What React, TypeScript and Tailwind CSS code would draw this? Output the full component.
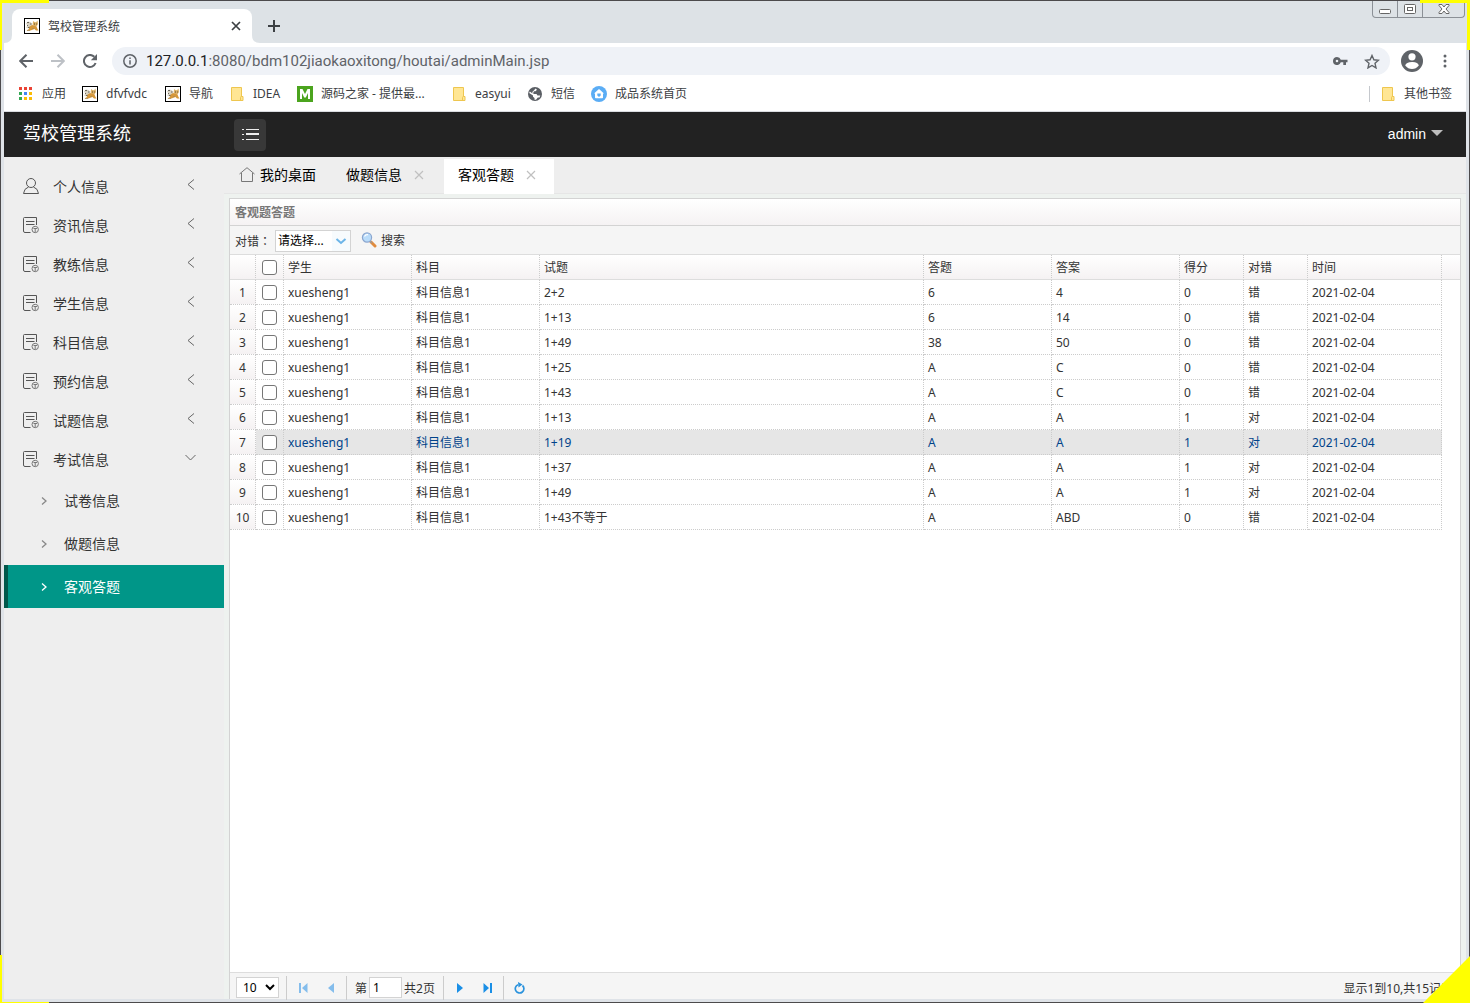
import React from "react";

const UI = "font-['Noto_Sans','Noto_Sans_CJK_SC',sans-serif]";

function TomcatIcon() {
  return (
    <svg width="16" height="16" viewBox="0 0 16 16" className="shrink-0" aria-hidden="true">
      <rect x=".5" y=".5" width="15" height="15" fill="#fff" stroke="#000" />
      <path d="M2 5.500l2-2 2.500.5L8.500 6 7 9l-2.500 1.500L2 9.500l1.500-2z" fill="#d8d2c2" />
      <path d="M9 3l1.500 1 1.500.2L13.500 2.500 14 6l-1.500 2.500L10 8.500 8.700 6.500z" fill="#ddb267" />
      <path d="M5 9l3-2 2 .5 2.500 1 1 2.500 1 1.500H12l-1.500-1.500-2 .7-2 .8H2.500L5 11z" fill="#d6983b" />
      <path d="M3 4.500h2M6 6h1.500M3 7.500h1M4 9.500h1.500" stroke="#6f6a60" fill="none" />
      <path d="M3 12.500h3M8 10.500h2" stroke="#a88b55" strokeWidth=".8" fill="none" />
      <path d="M10 6h1M12.200 6h.8" stroke="#5b482a" />
    </svg>
  );
}

function FolderIcon() {
  return (
    <svg width="13" height="14" viewBox="0 0 13 14" className="shrink-0" aria-hidden="true">
      <path d="M.5.500h10v9h1.500v4H.5z" fill="#ffe694" stroke="#eec64f" />
      <path d="M9.500 13V10.500q0-1 1-1" fill="none" stroke="#eec64f" />
    </svg>
  );
}

function AppsIcon() {
  const colors = ["#ea4335", "#ea4335", "#ea4335", "#34a853", "#4285f4", "#fbbc05", "#34a853", "#fbbc05", "#fbbc05"];
  return (
    <svg width="14" height="14" viewBox="0 0 14 14" className="shrink-0" aria-hidden="true">
      {colors.map((c, i) => (
        <rect key={i} x={(i % 3) * 5} y={Math.floor(i / 3) * 5} width="3" height="3" fill={c} />
      ))}
    </svg>
  );
}

function MIcon() {
  return (
    <svg width="16" height="16" viewBox="0 0 16 16" className="shrink-0" aria-hidden="true">
      <rect width="16" height="16" fill="#4ba41e" />
      <path d="M3 13V3h2.500L8 8l2.500-5H13v10h-2V7l-2.200 4.500H7.200L5 7v6z" fill="#fff" />
    </svg>
  );
}

function GlobeIcon() {
  return (
    <svg width="14" height="14" viewBox="0 0 14 14" className="shrink-0" aria-hidden="true">
      <circle cx="7" cy="7" r="7" fill="#5a5e64" />
      <path d="M7.500 1.500L9 2.800 7.500 4.300H6l-1 1.900 1 .8h2.500l1 1.500h2.800l-.8 2H9.800L8 12.800H6.500V11L5 9.800V8.500L1.200 6l.6-1.500 2.700 2L4.300 5l2-2z" fill="#fff" />
    </svg>
  );
}

function HouseBadgeIcon() {
  return (
    <svg width="16" height="16" viewBox="0 0 16 16" className="shrink-0" aria-hidden="true">
      <circle cx="8" cy="8" r="8" fill="#5badf5" />
      <path d="M8 3L3 7.500h1v4q0 .8.800.8h6.400q.8 0 .8-.8v-4h1z" fill="#fff" />
      <path d="M6.300 7.500h3.400v2L8 11 6.300 9.500z" fill="#5badf5" />
    </svg>
  );
}

function UserIcon() {
  return (
    <svg width="16" height="16" viewBox="0 0 16 16" fill="none" stroke="#555" className="shrink-0" aria-hidden="true">
      <circle cx="8" cy="5" r="4.500" />
      <path d="M5.500 9Q1 10.500.5 15.500h15Q15 10.500 10.500 9" />
    </svg>
  );
}

function DocIcon() {
  return (
    <svg width="16" height="17" viewBox="0 0 16 17" fill="none" stroke="#555" className="shrink-0" aria-hidden="true">
      <path d="M13.500 8V.500H1.500Q.5.500.5 1.500V14q0 1.500 1.500 1.500h5.500" />
      <path d="M3 4.500h8.500M3 7.500h8.500" />
      <circle cx="12.200" cy="12.500" r="3.200" stroke="#777" />
      <path d="M10.500 11.500h3.500M12.200 11.500V15" stroke="#777" />
    </svg>
  );
}

function Chevron({ dir, color = "#666", w = 6, h = 10 }: { dir: "left" | "right" | "down"; color?: string; w?: number; h?: number }) {
  const d =
    dir === "left"
      ? `M ${w} 0.5 L 1 ${h / 2} L ${w} ${h - 0.5}`
      : dir === "right"
        ? `M 1 0.5 L ${w} ${h / 2} L 1 ${h - 0.5}`
        : `M 0.5 1 L ${w / 2} ${h} L ${w - 0.5} 1`;
  return (
    <svg width={w + 1} height={h + 1} fill="none" stroke={color} strokeWidth={dir === "right" ? 1.3 : 1} className="shrink-0" aria-hidden="true">
      <path d={d} />
    </svg>
  );
}

function Cross({ size, color, stroke }: { size: number; color: string; stroke: number }) {
  return (
    <svg width={size} height={size} stroke={color} strokeWidth={stroke} aria-hidden="true">
      <path d={`M1 1L${size - 1} ${size - 1}M${size - 1} 1L1 ${size - 1}`} />
    </svg>
  );
}

function TitleStrip() {
  return (
    <div className="flex h-[42px] shrink-0 items-end justify-between bg-[#dde2e6] pl-2">
      <div className="flex items-end">
        <div className="relative flex h-[34px] w-60 items-center rounded-t-lg bg-white pr-[11px] pl-3">
          <svg className="absolute bottom-0 -left-2" width="8" height="8" aria-hidden="true"><path d="M8 0v8H0Q8 8 8 0" fill="#fff" /></svg>
          <svg className="absolute -right-2 bottom-0" width="8" height="8" aria-hidden="true"><path d="M0 0v8h8Q0 8 0 0" fill="#fff" /></svg>
          <TomcatIcon />
          <span className="ml-2 flex-1 pt-[2px] text-xs text-[#3c4043]">驾校管理系统</span>
          <button aria-label="关闭标签页"><Cross size={10} color="#3c4043" stroke={1.7} /></button>
        </div>
        <button aria-label="新标签页" className="flex h-[34px] w-11 items-center justify-center">
          <svg width="12" height="12" stroke="#3c4043" strokeWidth="2" aria-hidden="true"><path d="M6 0v12M0 6h12" /></svg>
        </button>
      </div>
      <div className="mr-px flex h-[17px] self-start rounded-b-[4px] border border-t-0 border-[#8b9096] text-[#5a5e64]">
        <button aria-label="最小化" className="flex w-[25px] items-center justify-center border-r border-[#8b9096]">
          <svg width="12" height="5" className="mt-1" aria-hidden="true"><rect x=".5" y=".5" width="11" height="4" rx="1" fill="#fff" stroke="#666" /></svg>
        </button>
        <button aria-label="还原" className="flex w-[25px] items-center justify-center border-r border-[#8b9096]">
          <svg width="12" height="10" fill="#fff" stroke="#666" aria-hidden="true"><rect x=".5" y=".5" width="11" height="9" rx="1" /><rect x="3.500" y="3.500" width="5" height="3" /></svg>
        </button>
        <button aria-label="关闭" className="flex w-[41px] items-center justify-center">
          <svg width="12" height="10" viewBox="0 0 12 10" fill="#fff" stroke="#666" aria-hidden="true"><path d="M1 .5h3l2 2.500L8 .5h3v1L8 5l3 3.500v1H8L6 7 4 9.500H1v-1L4 5 1 1.500z" /></svg>
        </button>
      </div>
    </div>
  );
}

function AddressBar() {
  return (
    <div className="flex h-9 shrink-0 items-center bg-white pr-[19px] pl-[15px]">
      <button aria-label="后退">
        <svg width="14" height="14" fill="none" stroke="#5f6368" strokeWidth="2" aria-hidden="true"><path d="M14 7H1.500M7.500.7L1.200 7l6.300 6.300" /></svg>
      </button>
      <button aria-label="前进" className="ml-[18px]">
        <svg width="14" height="14" fill="none" stroke="#bdc1c6" strokeWidth="2" aria-hidden="true"><path d="M0 7h12.500M6.500.7L12.800 7l-6.300 6.300" /></svg>
      </button>
      <button aria-label="刷新" className="ml-[18px]">
        <svg width="14" height="14" viewBox="0 0 14 14" aria-hidden="true">
          <path d="M12.600 9A6 6 0 1 1 11.300 2.800" fill="none" stroke="#5f6368" strokeWidth="2" />
          <path d="M14 0v6.200H7.800z" fill="#5f6368" />
        </svg>
      </button>
      <div className="ml-[15px] flex h-7 flex-1 items-center rounded-full bg-[#eff2f7] pr-[10px] pl-[11px]">
        <svg width="14" height="14" fill="none" stroke="#5f6368" strokeWidth="1.500" aria-hidden="true"><circle cx="7" cy="7" r="6.200" /><path d="M7 6.200v4.300M7 3.500v1.500" /></svg>
        <a href="#address" className="ml-[9px] flex-1 font-['Roboto',sans-serif] text-[15px] leading-7 text-[#5f6368]">
          <span className="text-[#202124]">127.0.0.1</span>:8080/bdm102jiaokaoxitong/houtai/adminMain.jsp
        </a>
        <button aria-label="密码">
          <svg width="15" height="8" viewBox="0 0 15 8" aria-hidden="true"><path fill="#5f6368" fillRule="evenodd" d="M4 0a4 4 0 0 1 3.800 2.700H14.500v2.600H13V8h-2.700V5.300H7.800A4 4 0 1 1 4 0zm0 2.700a1.300 1.300 0 1 0 0 2.600 1.300 1.300 0 0 0 0-2.600z" /></svg>
        </button>
        <button aria-label="收藏" className="ml-4">
          <svg width="16" height="15" viewBox="0 0 16 15" aria-hidden="true"><path d="M8 1.500l1.900 4.300 4.600.4-3.500 3.100 1 4.600L8 11.500l-4 2.400 1-4.600L1.500 6.200l4.600-.4z" fill="none" stroke="#5f6368" strokeWidth="1.400" /></svg>
        </button>
      </div>
      <button aria-label="用户" className="ml-[11px]">
        <svg width="22" height="22" viewBox="0 0 22 22" aria-hidden="true"><circle cx="11" cy="11" r="11" fill="#5f6368" /><circle cx="11" cy="6.800" r="3.600" fill="#fff" /><path d="M4.200 15.500Q5 12.200 11 12t6.800 3.500Q15 19 11 19t-6.800-3.500z" fill="#fff" /></svg>
      </button>
      <button aria-label="菜单" className="ml-5">
        <svg width="4" height="14" fill="#5f6368" aria-hidden="true"><circle cx="2" cy="2" r="1.500" /><circle cx="2" cy="7" r="1.500" /><circle cx="2" cy="12" r="1.500" /></svg>
      </button>
    </div>
  );
}

const bookmarks = [
  { label: "应用", icon: <AppsIcon />, gap: "gap-[9px]", w: "w-[63px]" },
  { label: "dfvfvdc", icon: <TomcatIcon />, gap: "gap-2", w: "w-[83px]" },
  { label: "导航", icon: <TomcatIcon />, gap: "gap-2", w: "w-[66px]" },
  { label: "IDEA", icon: <FolderIcon />, gap: "gap-[9px]", w: "w-[66px]" },
  { label: "源码之家 - 提供最...", icon: <MIcon />, gap: "gap-2", w: "w-[156px]" },
  { label: "easyui", icon: <FolderIcon />, gap: "gap-[9px]", w: "w-[75px]" },
  { label: "短信", icon: <GlobeIcon />, gap: "gap-[9px]", w: "w-[63px]" },
  { label: "成品系统首页", icon: <HouseBadgeIcon />, gap: "gap-2", w: "" },
];

function BookmarkBar() {
  return (
    <nav className="flex h-[33px] shrink-0 items-center border-b border-[#dadce0] bg-white pr-[14px] pb-[2px] pl-[15px] text-xs whitespace-nowrap text-[#3c4043]">
      {bookmarks.map((b) => (
        <a key={b.label} href="#bookmark" className={`flex shrink-0 items-center ${b.gap} ${b.w}`}>
          {b.icon}
          <span>{b.label}</span>
        </a>
      ))}
      <span className="flex-1" />
      <a href="#others" className="flex items-center gap-[9px] border-l border-[#c5c8cd] pl-3">
        <FolderIcon />
        <span>其他书签</span>
      </a>
    </nav>
  );
}

function AppHeader() {
  return (
    <header className="flex h-[45px] shrink-0 items-center bg-[#222] pr-[23px] pl-[19px]">
      <h1 className="w-[211px] pb-1 text-lg leading-6 text-white">驾校管理系统</h1>
      <button aria-label="折叠菜单" className="flex size-8 items-center justify-center rounded-sm bg-[#383838]">
        <svg width="17" height="11" stroke="#eee" aria-hidden="true"><path d="M0 .5h2M4 .5h13M0 5.500h2M4 5.500h13M0 10.500h2M4 10.500h13" /><path d="M4 5h13" strokeWidth="2" /></svg>
      </button>
      <span className="flex-1" />
      <button className="flex items-center gap-[5px] pb-px font-['Liberation_Sans',sans-serif] text-sm text-white">
        admin
        <svg width="12" height="6" className="mb-[3px]" aria-hidden="true"><path d="M0 0h12L6 6z" fill="#bdbdbd" /></svg>
      </button>
    </header>
  );
}

const menu = ["个人信息", "资讯信息", "教练信息", "学生信息", "科目信息", "预约信息", "试题信息", "考试信息"];
const submenu = ["试卷信息", "做题信息", "客观答题"];

function Sidebar() {
  return (
    <aside className="w-[220px] shrink-0 bg-[#eee] pt-[10px] text-sm text-[#333]">
      {menu.map((label, i) => {
        const open = i === menu.length - 1;
        return (
          <button key={label} className="flex h-[39px] w-full items-center pr-[27px] pl-[19px]">
            <span className="mb-px flex">{i === 0 ? <UserIcon /> : <DocIcon />}</span>
            <span className="ml-[14px] flex-1 text-left">{label}</span>
            <span className="mb-1 flex w-3 justify-center">{open ? <Chevron dir="down" w={11} h={6} /> : <Chevron dir="left" w={7} h={11} />}</span>
          </button>
        );
      })}
      {submenu.map((label, i) => {
        const active = i === submenu.length - 1;
        return (
          <a
            key={label}
            href="#sub"
            className={`flex h-[43px] items-center border-l-4 pl-[33px] ${active ? "border-[#00574b] bg-[#009688] text-white" : "border-transparent"}`}
          >
            <span className="mt-[2px] flex"><Chevron dir="right" w={5} h={8} color={active ? "#fff" : "#888"} /></span>
            <span className="ml-[17px]">{label}</span>
          </a>
        );
      })}
    </aside>
  );
}

function TabStrip() {
  return (
    <div className="flex h-[37px] shrink-0 items-start border-b border-[#e6e6e6] bg-[#eee] pt-[2px] text-sm whitespace-nowrap text-black">
      <a href="#desk" className="flex h-8 w-[108px] items-center gap-[5px] pl-[15px]">
        <svg width="16" height="15" viewBox="0 0 16 15" fill="none" stroke="#777" className="mb-px" aria-hidden="true"><path d="M.5 7L8 .7 15.500 7M2.500 6v8.500h11V6" /></svg>
        我的桌面
      </a>
      <a href="#done" className="flex h-8 w-28 items-center gap-3 pl-[14px]">
        做题信息
        <Cross size={10} color="#c0c0c0" stroke={1.2} />
      </a>
      <a href="#answers" className="flex h-[35px] w-[110px] items-center gap-3 bg-white pb-[3px] pl-[14px]">
        客观答题
        <Cross size={10} color="#c0c0c0" stroke={1.2} />
      </a>
    </div>
  );
}

const rows = [
  ["2+2", "6", "4", "0", "错"],
  ["1+13", "6", "14", "0", "错"],
  ["1+49", "38", "50", "0", "错"],
  ["1+25", "A", "C", "0", "错"],
  ["1+43", "A", "C", "0", "错"],
  ["1+13", "A", "A", "1", "对"],
  ["1+19", "A", "A", "1", "对"],
  ["1+37", "A", "A", "1", "对"],
  ["1+49", "A", "A", "1", "对"],
  ["1+43不等于", "A", "ABD", "0", "错"],
];
const columns = ["学生", "科目", "试题", "答题", "答案", "得分", "对错", "时间"];
const box = "block size-[15px] mx-auto appearance-none rounded-[3px] border border-[#767676] bg-white";

function DataTable() {
  return (
    <table className="w-full table-fixed border-separate border-spacing-0 text-xs leading-4 text-[#333]">
      <colgroup>
        <col className="w-[26px]" />
        <col className="w-7" />
        <col className="w-32" />
        <col className="w-32" />
        <col className="w-96" />
        <col className="w-32" />
        <col className="w-32" />
        <col className="w-16" />
        <col className="w-16" />
        <col className="w-[134px]" />
        <col />
      </colgroup>
      <thead>
        <tr className="h-[25px] [&>th]:border-b [&>th]:border-b-[#ddd] [&>th]:bg-linear-to-b [&>th]:from-white [&>th]:to-[#f5f2f3] [&>th]:p-0 [&>th]:text-left [&>th]:font-normal">
          <th className="border-r border-r-[#ccc] [border-right-style:dotted]" />
          <th className="border-r border-r-[#ccc] [border-right-style:dotted]"><input type="checkbox" aria-label="全选" className={box} /></th>
          {columns.map((c) => (
            <th key={c} className="border-r border-r-[#ccc] [border-right-style:dotted]"><div className="pt-px pl-1">{c}</div></th>
          ))}
          <th />
        </tr>
      </thead>
      <tbody>
        {rows.map((r, i) => (
          <tr
            key={i}
            className={`h-[25px] [&>td]:border-r [&>td]:border-b [&>td]:border-dotted [&>td]:border-[#ccc] [&>td]:p-0 ${i === 6 ? "text-[#00438a] [&>td:not(:first-child)]:bg-[#e6e6e6]" : ""}`}
          >
            <td className="bg-linear-to-b from-white to-[#f5f2f3] text-center text-[#333]"><div className="pt-px">{i + 1}</div></td>
            <td><input type="checkbox" aria-label={`选择第${i + 1}行`} className={box} /></td>
            {["xuesheng1", "科目信息1", ...r, "2021-02-04"].map((v, j) => (
              <td key={j}><div className="pt-px pl-1">{v}</div></td>
            ))}
          </tr>
        ))}
      </tbody>
    </table>
  );
}

function Pager() {
  const sep = "h-6 w-px bg-[#ccc]";
  return (
    <footer className="flex h-[27px] shrink-0 items-center border-t border-[#ddd] bg-[#f5f5f5] pt-[3px] pr-[7px] pl-[6px] text-xs whitespace-nowrap text-[#333]">
      <span className="relative flex items-center">
        <select aria-label="每页条数" className="h-[21px] w-[43px] appearance-none border border-[#d3d3d3] bg-white pl-[6px] font-['Noto_Sans',sans-serif] text-xs leading-4 text-black" defaultValue="10">
          <option>10</option>
          <option>20</option>
        </select>
        <svg className="pointer-events-none absolute top-[7px] right-[4px]" width="10" height="7" fill="none" stroke="#000" strokeWidth="2" aria-hidden="true"><path d="M1 1l4 4 4-4" /></svg>
      </span>
      <span className={`${sep} ml-[7px]`} />
      <button aria-label="首页" className="ml-3">
        <svg width="9" height="10" fill="#84bdec" aria-hidden="true"><path d="M0 0h2v10H0zM8.500 0v10L3 5z" /></svg>
      </button>
      <button aria-label="上一页" className="ml-5">
        <svg width="6" height="10" fill="#84bdec" aria-hidden="true"><path d="M6 0v10L0 5z" /></svg>
      </button>
      <span className={`${sep} ml-3`} />
      <label htmlFor="page" className="ml-2 pt-[2px]">第</label>
      <input id="page" defaultValue="1" className="ml-[2px] h-[21px] w-[33px] border border-[#d3d3d3] bg-white pl-[3px] text-xs leading-4 text-black" />
      <span className="ml-[2px] pt-[2px]">共2页</span>
      <span className={`${sep} ml-2`} />
      <button aria-label="下一页" className="ml-[13px]">
        <svg width="6" height="10" fill="#1a8fe6" aria-hidden="true"><path d="M0 0v10l6-5z" /></svg>
      </button>
      <button aria-label="末页" className="ml-5">
        <svg width="9" height="10" fill="#1a8fe6" aria-hidden="true"><path d="M7 0h2v10H7zM.5 0v10L6 5z" /></svg>
      </button>
      <span className={`${sep} ml-[11px]`} />
      <button aria-label="刷新列表" className="ml-[10px]">
        <svg width="11" height="12" viewBox="0 0 11 12" aria-hidden="true">
          <path d="M8.500 3.500A4.300 4.300 0 1 1 4 2.700" fill="none" stroke="#2b93dd" strokeWidth="1.700" />
          <path d="M4 0l4.500 2.500L4.500 5.500z" fill="#2b93dd" />
        </svg>
      </button>
      <span className="flex-1" />
      <span className="pt-[2px]">显示1到10,共15记录</span>
    </footer>
  );
}

function Panel() {
  return (
    <section className="flex min-h-0 flex-1 flex-col border border-b-0 border-[#d3d3d3] bg-white">
      <h2 className="h-[27px] shrink-0 border-b border-[#d3d3d3] bg-linear-to-b from-white to-[#f5f2f3] pl-[5px] text-xs leading-7 font-bold text-[#777]">客观题答题</h2>
      <div className="flex h-[29px] shrink-0 items-center border-b border-[#ddd] bg-[#f5f5f5] pl-[5px] text-xs text-[#333]">
        <label htmlFor="result" className="pt-[2px]">对错<span className="font-['Noto_Sans_CJK_TC',sans-serif]">：</span></label>
        <span className="relative ml-1 flex">
          <select id="result" className="mt-[2px] h-[22px] w-[76px] appearance-none border border-[#d3d3d3] bg-white pl-[2px] text-xs leading-5 text-black">
            <option>请选择...</option>
            <option>对</option>
            <option>错</option>
          </select>
          <svg className="pointer-events-none absolute top-[2px] right-px mt-px h-5 w-[18px] bg-[#f7fbfd]" viewBox="0 0 18 20" fill="none" stroke="#6cb5e8" strokeWidth="2" aria-hidden="true"><path d="M4.500 8l4.500 4 4.500-4" /></svg>
        </span>
        <button className="ml-[10px] flex items-center gap-1">
          <svg width="16" height="16" viewBox="0 0 16 16" aria-hidden="true">
            <path d="M10 10l4 4" stroke="#e08b3e" strokeWidth="3" strokeLinecap="round" />
            <path d="M9 9l2 2" stroke="#999" strokeWidth="1.500" />
            <circle cx="6" cy="5.500" r="4.600" fill="#b9dcfa" stroke="#8ba6cf" strokeWidth="1.200" />
            <path d="M3.500 4.500Q4.500 2.500 7 2.700" stroke="#fff" strokeWidth="1.300" fill="none" />
          </svg>
          <span className="pt-[2px]">搜索</span>
        </button>
      </div>
      <div className="min-h-0 flex-1 overflow-hidden">
        <DataTable />
      </div>
      <Pager />
    </section>
  );
}

export default function App() {
  return (
    <div className={`relative h-screen overflow-hidden ${UI}`}>
      <div className="flex h-full flex-col border border-[#4c4a4c] bg-[#dfe3e8] px-[3px] pb-[3px]">
        <TitleStrip />
        <AddressBar />
        <BookmarkBar />
        <AppHeader />
        <div className="flex min-h-0 flex-1">
          <Sidebar />
          <main className="flex min-w-0 flex-1 flex-col bg-[#eef2ef]">
            <TabStrip />
            <div className="flex min-h-0 flex-1 flex-col px-[5px] pt-1">
              <Panel />
            </div>
          </main>
        </div>
      </div>
      <i className="absolute top-0 left-0 h-[3px] w-[49px] bg-[#ff0]" />
      <i className="absolute top-0 left-0 h-[50px] w-[2px] bg-[#ff0]" />
      <i className="absolute top-0 right-0 h-[3px] w-[50px] bg-[#ff0]" />
      <i className="absolute top-0 right-0 h-[50px] w-[3px] bg-[#ff0]" />
      <i className="absolute bottom-0 left-0 h-12 w-[2px] bg-[#ff0]" />
      <i className="absolute bottom-0 left-0 h-px w-[49px] bg-[#ff0]" />
      <svg className="absolute right-0 bottom-0" width="47" height="47" aria-hidden="true"><path d="M47 0v47H0z" fill="#ff0" /></svg>
    </div>
  );
}
